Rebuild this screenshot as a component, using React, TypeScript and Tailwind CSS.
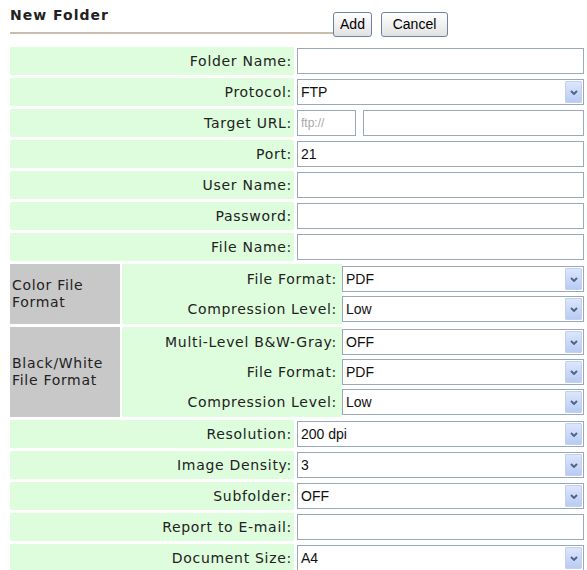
const labelFont = { fontFamily: '"DejaVu Sans", Verdana, sans-serif' };

function Arrow() {
  return (
    <div className="flex h-[22px] w-[17px] shrink-0 items-center justify-center rounded-[1px] border border-[#c3d1f0] bg-gradient-to-b from-[#dce6fc] to-[#b9cbf3]">
      <svg width="8" height="5" viewBox="0 0 8 5">
        <path d="M1 1 L4 4 L7 1" fill="none" stroke="#4d6185" strokeWidth="1.8" />
      </svg>
    </div>
  );
}

function Select({ value }: { value: string }) {
  return (
    <div className="flex h-[26px] w-full items-center justify-between border border-[#9aa8bb] bg-white pl-[3px] pr-[1px] font-['Liberation_Sans',Arial,sans-serif] text-[14px] text-[#111]">
      <span>{value}</span>
      <Arrow />
    </div>
  );
}

function TextBox({ className = 'w-full', placeholder }: { className?: string; placeholder?: string }) {
  return (
    <input
      readOnly
      placeholder={placeholder}
      className={`h-[26px] border border-[#9aa8bb] bg-white px-[3px] font-['Liberation_Sans',Arial,sans-serif] text-[12px] outline-none placeholder:text-[#a8a8a8] ${className}`}
    />
  );
}

function Row({ label, children }: { label: string; children: React.ReactNode }) {
  return (
    <div className="flex h-[28px] gap-[3px]">
      <div
        className="flex w-[284px] shrink-0 items-center justify-end bg-[#ddfddd] pr-[2px] text-[14px] tracking-[0.7px] text-[#222]"
        style={labelFont}
      >
        {label}
      </div>
      <div className="flex flex-1 items-center gap-[7px]">{children}</div>
    </div>
  );
}

function Group({ title, rows }: { title: React.ReactNode; rows: [string, string][] }) {
  return (
    <div className="flex gap-[2px]">
      <div
        className="flex w-[110px] shrink-0 items-center bg-[#c8c8c8] pl-[2px] text-[14px] leading-[17px] tracking-[0.7px] text-[#222]"
        style={labelFont}
      >
        <span>{title}</span>
      </div>
      <div className="flex flex-1 flex-col bg-[#ddfddd]">
        {rows.map(([label, value], i) => (
          <div key={i} className="flex h-[30px] items-center gap-[3px]">
            <div
              className="w-[217px] shrink-0 pr-[2px] text-right text-[14px] tracking-[0.7px] text-[#222]"
              style={labelFont}
            >
              {label}
            </div>
            <div className="flex h-full flex-1 items-center bg-white">
              <Select value={value} />
            </div>
          </div>
        ))}
      </div>
    </div>
  );
}

export default function App() {
  return (
    <div className="min-h-[570px] bg-white">
      <div className="ml-[10px] w-[574px]">
        <div className="flex items-start">
          <div
            className="h-[34px] w-[323px] border-b-2 border-[#c8bcad] pt-[5px] text-[14px] font-bold tracking-[1px] text-[#222]"
            style={labelFont}
          >
            New Folder
          </div>
          <div className="mt-[12px] flex gap-[9px] font-['Liberation_Sans',Arial,sans-serif] text-[14px] text-black">
            <button className="h-[25px] w-[39px] rounded-[3px] border border-[#6f819c] bg-gradient-to-b from-white to-[#e2e2e2]">
              Add
            </button>
            <button className="h-[25px] w-[67px] rounded-[3px] border border-[#6f819c] bg-gradient-to-b from-white to-[#e2e2e2]">
              Cancel
            </button>
          </div>
        </div>

        <div className="mt-[10px] flex flex-col gap-[3px]">
          <Row label="Folder Name:">
            <TextBox />
          </Row>
          <Row label="Protocol:">
            <Select value="FTP" />
          </Row>
          <Row label="Target URL:">
            <TextBox className="w-[59px]" placeholder="ftp://" />
            <TextBox className="flex-1" />
          </Row>
          <Row label="Port:">
            <div className="flex h-[26px] w-full items-center border border-[#9aa8bb] bg-white pl-[3px] font-['Liberation_Sans',Arial,sans-serif] text-[14px] text-[#111]">
              21
            </div>
          </Row>
          <Row label="User Name:">
            <TextBox />
          </Row>
          <Row label="Password:">
            <TextBox />
          </Row>
          <Row label="File Name:">
            <TextBox />
          </Row>
          <Group
            title={
              <>
                Color File
                <br />
                Format
              </>
            }
            rows={[
              ['File Format:', 'PDF'],
              ['Compression Level:', 'Low'],
            ]}
          />
          <Group
            title={
              <>
                Black/White
                <br />
                File Format
              </>
            }
            rows={[
              ['Multi-Level B&W-Gray:', 'OFF'],
              ['File Format:', 'PDF'],
              ['Compression Level:', 'Low'],
            ]}
          />
          <Row label="Resolution:">
            <Select value="200 dpi" />
          </Row>
          <Row label="Image Density:">
            <Select value="3" />
          </Row>
          <Row label="Subfolder:">
            <Select value="OFF" />
          </Row>
          <Row label="Report to E-mail:">
            <TextBox />
          </Row>
          <Row label="Document Size:">
            <Select value="A4" />
          </Row>
        </div>
      </div>
    </div>
  );
}
